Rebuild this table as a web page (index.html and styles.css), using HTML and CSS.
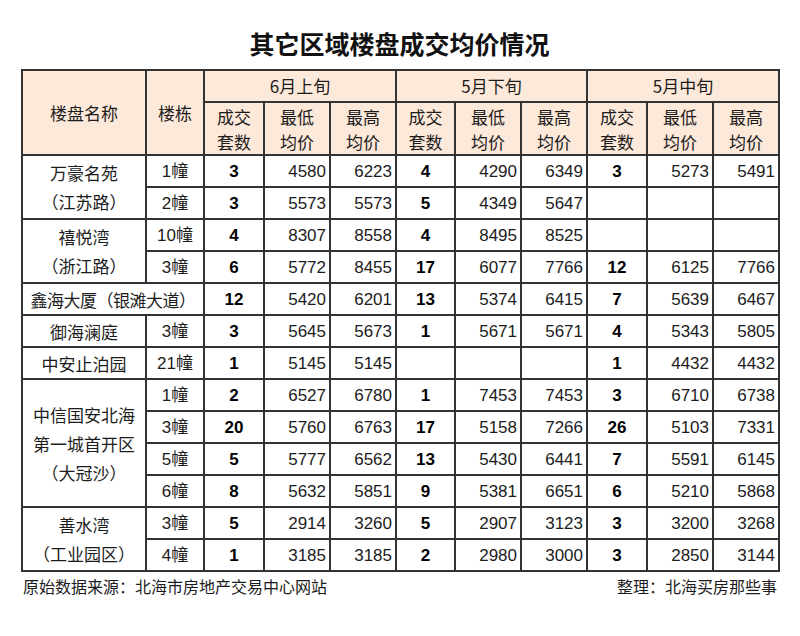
FILE: index.html
```html
<!DOCTYPE html>
<html lang="zh">
<head>
<meta charset="utf-8">
<title>其它区域楼盘成交均价情况</title>
<link rel="stylesheet" href="styles.css">
</head>
<body>
<div class="page">
  <h1 class="title">其它区域楼盘成交均价情况</h1>
  <table class="data">
    <colgroup>
      <col class="c-name"><col class="c-bld">
      <col class="c-n"><col class="c-p"><col class="c-p">
      <col class="c-n2"><col class="c-p"><col class="c-p">
      <col class="c-n"><col class="c-p"><col class="c-p">
    </colgroup>
    <thead>
      <tr class="h1">
        <th rowspan="2">楼盘名称</th>
        <th rowspan="2">楼栋</th>
        <th colspan="3">6月上旬</th>
        <th colspan="3">5月下旬</th>
        <th colspan="3">5月中旬</th>
      </tr>
      <tr class="h2">
        <th>成交<br>套数</th><th>最低<br>均价</th><th>最高<br>均价</th>
        <th>成交<br>套数</th><th>最低<br>均价</th><th>最高<br>均价</th>
        <th>成交<br>套数</th><th>最低<br>均价</th><th>最高<br>均价</th>
      </tr>
    </thead>
    <tbody>
      <tr>
        <td rowspan="2" class="name">万豪名苑<br>（江苏路）</td>
        <td class="bld">1幢</td>
        <td class="n">3</td><td class="p">4580</td><td class="p">6223</td>
        <td class="n">4</td><td class="p">4290</td><td class="p">6349</td>
        <td class="n">3</td><td class="p">5273</td><td class="p">5491</td>
      </tr>
      <tr>
        <td class="bld">2幢</td>
        <td class="n">3</td><td class="p">5573</td><td class="p">5573</td>
        <td class="n">5</td><td class="p">4349</td><td class="p">5647</td>
        <td class="n"></td><td class="p"></td><td class="p"></td>
      </tr>
      <tr>
        <td rowspan="2" class="name">禧悦湾<br>（浙江路）</td>
        <td class="bld">10幢</td>
        <td class="n">4</td><td class="p">8307</td><td class="p">8558</td>
        <td class="n">4</td><td class="p">8495</td><td class="p">8525</td>
        <td class="n"></td><td class="p"></td><td class="p"></td>
      </tr>
      <tr>
        <td class="bld">3幢</td>
        <td class="n">6</td><td class="p">5772</td><td class="p">8455</td>
        <td class="n">17</td><td class="p">6077</td><td class="p">7766</td>
        <td class="n">12</td><td class="p">6125</td><td class="p">7766</td>
      </tr>
      <tr>
        <td colspan="2" class="name wide">鑫海大厦（银滩大道）</td>
        <td class="n">12</td><td class="p">5420</td><td class="p">6201</td>
        <td class="n">13</td><td class="p">5374</td><td class="p">6415</td>
        <td class="n">7</td><td class="p">5639</td><td class="p">6467</td>
      </tr>
      <tr>
        <td class="name">御海澜庭</td>
        <td class="bld">3幢</td>
        <td class="n">3</td><td class="p">5645</td><td class="p">5673</td>
        <td class="n">1</td><td class="p">5671</td><td class="p">5671</td>
        <td class="n">4</td><td class="p">5343</td><td class="p">5805</td>
      </tr>
      <tr>
        <td class="name">中安止泊园</td>
        <td class="bld">21幢</td>
        <td class="n">1</td><td class="p">5145</td><td class="p">5145</td>
        <td class="n"></td><td class="p"></td><td class="p"></td>
        <td class="n">1</td><td class="p">4432</td><td class="p">4432</td>
      </tr>
      <tr>
        <td rowspan="4" class="name">中信国安北海<br>第一城首开区<br>（大冠沙）</td>
        <td class="bld">1幢</td>
        <td class="n">2</td><td class="p">6527</td><td class="p">6780</td>
        <td class="n">1</td><td class="p">7453</td><td class="p">7453</td>
        <td class="n">3</td><td class="p">6710</td><td class="p">6738</td>
      </tr>
      <tr>
        <td class="bld">3幢</td>
        <td class="n">20</td><td class="p">5760</td><td class="p">6763</td>
        <td class="n">17</td><td class="p">5158</td><td class="p">7266</td>
        <td class="n">26</td><td class="p">5103</td><td class="p">7331</td>
      </tr>
      <tr>
        <td class="bld">5幢</td>
        <td class="n">5</td><td class="p">5777</td><td class="p">6562</td>
        <td class="n">13</td><td class="p">5430</td><td class="p">6441</td>
        <td class="n">7</td><td class="p">5591</td><td class="p">6145</td>
      </tr>
      <tr>
        <td class="bld">6幢</td>
        <td class="n">8</td><td class="p">5632</td><td class="p">5851</td>
        <td class="n">9</td><td class="p">5381</td><td class="p">6651</td>
        <td class="n">6</td><td class="p">5210</td><td class="p">5868</td>
      </tr>
      <tr>
        <td rowspan="2" class="name">善水湾<br>（工业园区）</td>
        <td class="bld">3幢</td>
        <td class="n">5</td><td class="p">2914</td><td class="p">3260</td>
        <td class="n">5</td><td class="p">2907</td><td class="p">3123</td>
        <td class="n">3</td><td class="p">3200</td><td class="p">3268</td>
      </tr>
      <tr>
        <td class="bld">4幢</td>
        <td class="n">1</td><td class="p">3185</td><td class="p">3185</td>
        <td class="n">2</td><td class="p">2980</td><td class="p">3000</td>
        <td class="n">3</td><td class="p">2850</td><td class="p">3144</td>
      </tr>
    </tbody>
  </table>
  <div class="foot">
    <span>原始数据来源：北海市房地产交易中心网站</span>
    <span>整理：北海买房那些事</span>
  </div>
</div>
</body>
</html>
```
FILE: styles.css
```css
* { box-sizing: border-box; }
html, body { margin: 0; padding: 0; background: #fff; }
body {
  font-family: "Liberation Sans", "Noto Sans CJK SC", sans-serif;
  color: #1c1c1c;
}
.page {
  width: 800px;
  height: 636px;
  padding: 0 0 0 21px;
}
.title {
  margin: 0;
  padding-top: 27px;
  width: 757px;
  height: 69px;
  text-align: center;
  font-family: "Noto Sans CJK SC", sans-serif;
  font-weight: 700;
  font-size: 25px;
  line-height: 32px;
  color: #111;
}
.data {
  border-collapse: collapse;
  table-layout: fixed;
  width: 757px;
  font-size: 17px;
}
.c-name { width: 124px; }
.c-bld { width: 58px; }
.c-n { width: 60px; }
.c-n2 { width: 59px; }
.c-p { width: 66px; }
.data th, .data td {
  border: 2px solid #333;
  padding: 0;
  font-weight: 400;
  overflow: hidden;
  white-space: nowrap;
}
.data th {
  background: #fde9da;
  font-family: "Noto Sans CJK SC", sans-serif;
  text-align: center;
}
.data .h1 th { height: 32px; line-height: 26px; }
.data .h2 th { height: 53px; line-height: 25px; padding-top: 0; }
.data tbody tr { height: 32px; }
.data td { line-height: 26px; padding-top: 2px; }
.data td.name {
  text-align: center;
  font-family: "Noto Sans CJK SC", sans-serif;
  line-height: 29px;
  padding-top: 0;
}
.data td.wide { letter-spacing: -0.5px; }
.data td.bld { text-align: center; }
.data td.n {
  text-align: center;
  font-family: "Liberation Sans Narrow", "Liberation Sans", sans-serif;
  font-weight: 700;
  font-stretch: condensed;
  color: #000;
}
.data td.p { text-align: right; padding-right: 3px; }
.foot {
  width: 757px;
  display: flex;
  justify-content: space-between;
  padding: 3px 1px 0 2px;
  font-family: "Noto Sans CJK SC", sans-serif;
  font-size: 16px;
  line-height: 22px;
  color: #1c1c1c;
}
```
